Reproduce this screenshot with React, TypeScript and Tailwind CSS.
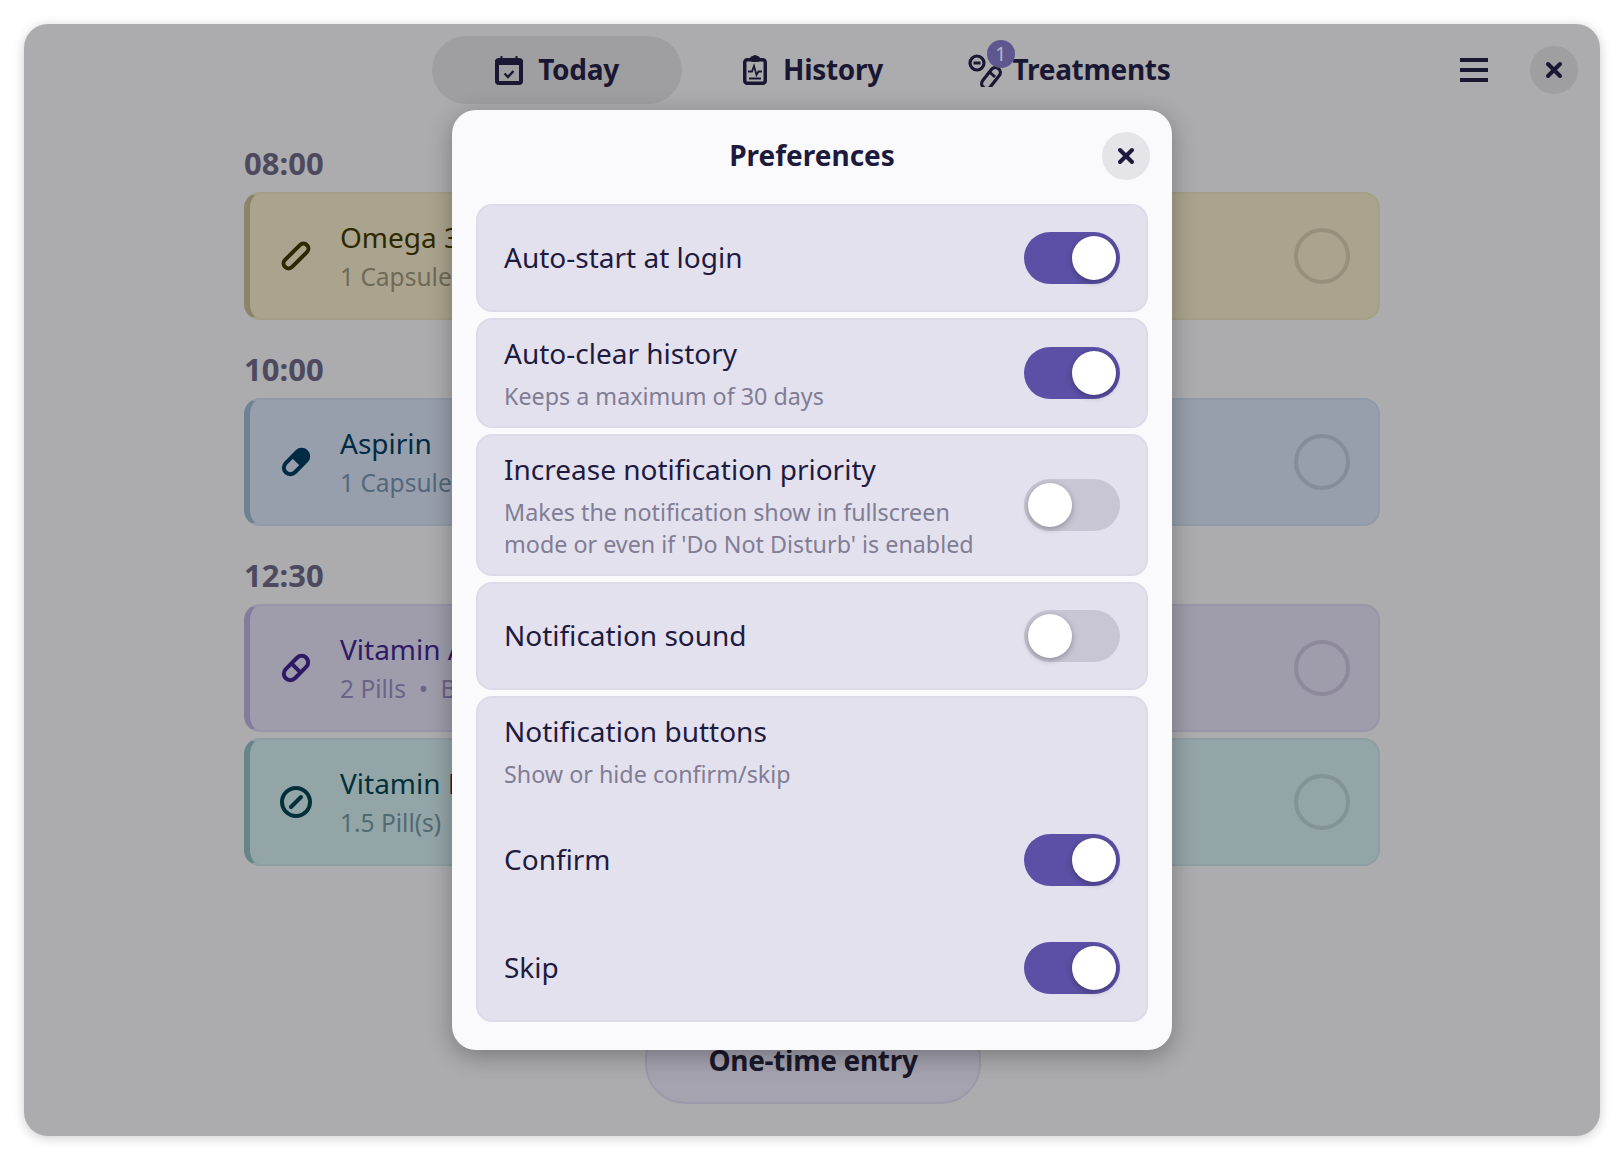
import { X } from "lucide-react";

const font = "font-['Noto_Sans','Liberation_Sans',sans-serif]";

function Toggle({ on }: { on: boolean }) {
  return (
    <div
      className={
        on
          ? "flex h-[52px] w-[96px] shrink-0 items-center justify-end rounded-full bg-[#5b50a6] p-1"
          : "flex h-[52px] w-[96px] shrink-0 items-center justify-start rounded-full bg-[#c8c6d4] p-1"
      }
    >
      <div className="h-11 w-11 rounded-full bg-white shadow-[0_2px_6px_rgba(0,0,0,0.3)]" />
    </div>
  );
}

function CalendarIcon() {
  return (
    <svg width="28" height="29" viewBox="0 0 28 29" fill="none" stroke="#1a1733">
      <rect x="2" y="4" width="24" height="23" rx="2" strokeWidth="4" />
      <path d="M0 6.5h28" strokeWidth="5" />
      <path d="M6.5 3V0M21.5 3V0" strokeWidth="2" />
      <path d="M9.5 17.5l3.5 3.5 5.5-6" strokeWidth="2.4" />
    </svg>
  );
}

function ClipboardIcon() {
  return (
    <svg width="24" height="30" viewBox="0 0 24 30" fill="none" stroke="#1a1733">
      <rect x="1.75" y="4.75" width="20.5" height="23.5" rx="2.5" strokeWidth="3.5" />
      <rect x="7" y="1" width="10" height="6" rx="3" fill="#1a1733" strokeWidth="0" />
      <circle cx="12" cy="2.5" r="2.5" fill="#1a1733" strokeWidth="0" />
      <path d="M5 16.5h4l2-5.5 2.5 9 2-3.5h3.5" strokeWidth="1.8" />
      <path d="M6 23.5h12" strokeWidth="2" />
    </svg>
  );
}

function TreatmentsIcon() {
  return (
    <svg width="34" height="34" viewBox="0 0 34 34" fill="none" stroke="#1a1733">
      <circle cx="9" cy="10" r="7" strokeWidth="3.2" />
      <path d="M5.5 10h7" strokeWidth="3" />
      <rect x="11" y="20" width="24" height="10" rx="5" strokeWidth="3.2" transform="rotate(-52 23 25)" />
      <path d="M21.5 19l5.5 5" strokeWidth="3" />
    </svg>
  );
}

function CapsuleIcon({ color, variant }: { color: string; variant: "plain" | "half" | "split" }) {
  if (variant === "plain") {
    return (
      <svg width="40" height="40" viewBox="0 0 40 40" fill="none">
        <rect x="4.5" y="15" width="31" height="10" rx="5" stroke={color} strokeWidth="4" transform="rotate(-45 20 20)" />
      </svg>
    );
  }
  return (
    <svg width="40" height="40" viewBox="0 0 40 40" fill="none">
      <g transform="rotate(-45 20 20)">
        {variant === "half" && <path d="M20 13.5h8a6.5 6.5 0 0 1 0 13h-8z" fill={color} />}
        <rect x="5.5" y="13.5" width="29" height="13" rx="6.5" stroke={color} strokeWidth="4" />
        {variant === "split" && <path d="M20 13v14" stroke={color} strokeWidth="4" />}
      </g>
    </svg>
  );
}

function BlockedIcon({ color }: { color: string }) {
  return (
    <svg width="34" height="34" viewBox="0 0 34 34" fill="none" stroke={color}>
      <circle cx="17" cy="17" r="14" strokeWidth="4" />
      <path d="M12 22l10-10" strokeWidth="4" strokeLinecap="round" />
    </svg>
  );
}

type Card = {
  name: string;
  sub: string;
  bg: string;
  title: string;
  text: string;
  ring: string;
  icon: React.ReactNode;
};

function ScheduleCard({ card }: { card: Card }) {
  return (
    <div className={`flex h-[128px] items-center rounded-2xl border-2 border-l-[6px] pr-[28px] pl-[26px] ${card.bg}`}>
      <div className="flex w-[40px] shrink-0 items-center justify-center">{card.icon}</div>
      <div className="ml-6 min-w-0 flex-1">
        <p className={`text-[28px] leading-[38px] ${card.title}`}>{card.name}</p>
        <p className={`mt-1 text-[24.5px] leading-[34px] whitespace-pre ${card.text}`}>{card.sub}</p>
      </div>
      <div className={`h-14 w-14 rounded-full border-4 ${card.ring}`} />
    </div>
  );
}

function Section({ time, cards, first }: { time: string; cards: Card[]; first?: boolean }) {
  return (
    <section className={first ? "mt-[41px]" : "mt-[31px]"}>
      <h2 className="mb-[11px] text-[31px] leading-9 font-bold text-[#4d4a60]">{time}</h2>
      <div className="flex flex-col gap-[6px]">
        {cards.map((c) => (
          <ScheduleCard key={c.name} card={c} />
        ))}
      </div>
    </section>
  );
}

const omega: Card = {
  name: "Omega 3",
  sub: "1 Capsule",
  bg: "border-[#a59f88] border-l-[#8a8469] bg-[#aaa48e]",
  title: "text-[#2e2800]",
  text: "text-[#6f6a58]",
  ring: "border-[#96907d]",
  icon: <CapsuleIcon color="#2e2800" variant="plain" />,
};
const aspirin: Card = {
  name: "Aspirin",
  sub: "1 Capsule",
  bg: "border-[#919aa8] border-l-[#6f8294] bg-[#979fac]",
  title: "text-[#012b44]",
  text: "text-[#55677b]",
  ring: "border-[#858d9b]",
  icon: <CapsuleIcon color="#012b44" variant="half" />,
};
const vitaminA: Card = {
  name: "Vitamin A",
  sub: "2 Pills  •  Before",
  bg: "border-[#9995a6] border-l-[#847c9b] bg-[#9f9cab]",
  title: "text-[#2e1a66]",
  text: "text-[#6a6488]",
  ring: "border-[#8e8a9b]",
  icon: <CapsuleIcon color="#2e1a66" variant="split" />,
};
const vitaminB: Card = {
  name: "Vitamin B",
  sub: "1.5 Pill(s)",
  bg: "border-[#8e9fa3] border-l-[#668588] bg-[#94a5a8]",
  title: "text-[#01303a]",
  text: "text-[#516a70]",
  ring: "border-[#839396]",
  icon: <BlockedIcon color="#01303a" />,
};

function PrefRow({ title, sub, on }: { title: string; sub?: string[]; on: boolean }) {
  return (
    <div className={`flex items-center justify-between rounded-2xl border-2 border-[#dddbe7] bg-[#e3e1ee] px-[26px] ${sub ? "" : "h-[108px]"}`}>
      <div className={sub ? "pt-[15px] pb-[14px]" : "pb-[2px]"}>
        <p className="text-[28px] leading-9 text-[#1f1b3f]">{title}</p>
        {sub && (
          <div className="mt-[9px] text-[23.3px] leading-8 text-[#807d95]">
            {sub.map((line) => (
              <p key={line}>{line}</p>
            ))}
          </div>
        )}
      </div>
      <Toggle on={on} />
    </div>
  );
}

export default function App() {
  return (
    <div className={`min-h-[1164px] bg-white pt-6 pl-6 ${font}`}>
      <div className="relative flex h-[1112px] w-[1576px] flex-col rounded-3xl bg-[#acacae] shadow-[0_2px_12px_rgba(0,0,0,0.2)]">
        <header className="grid grid-cols-[1fr_auto_1fr] items-center pt-3 pr-[22px] pl-6">
          <div />
          <nav className="flex gap-[6px] text-[28px] font-bold tracking-[-0.3px] text-[#1a1733]">
            <div className="flex h-[68px] w-[250px] items-center justify-center gap-[15px] rounded-full bg-[#9f9fa2]">
              <CalendarIcon />
              <span className="pb-[2px]">Today</span>
            </div>
            <div className="flex h-[68px] w-[250px] items-center justify-center gap-4 rounded-full">
              <ClipboardIcon />
              <span className="pb-[2px]">History</span>
            </div>
            <div className="flex h-[68px] w-[250px] items-center justify-center gap-[11px] rounded-full">
              <div className="relative">
                <TreatmentsIcon />
                <span className="absolute -top-[13px] left-[19px] flex h-7 w-7 items-center justify-center rounded-full bg-[#5e578f] text-[20px] font-normal text-[#b5b2c9]">
                  1
                </span>
              </div>
              <span className="pb-[2px]">Treatments</span>
            </div>
          </nav>
          <div className="flex items-center justify-end">
            <div className="flex w-7 flex-col gap-[6px]">
              <div className="h-1 bg-[#1a1733]" />
              <div className="h-1 bg-[#1a1733]" />
              <div className="h-1 bg-[#1a1733]" />
            </div>
            <div className="ml-[42px] flex h-12 w-12 items-center justify-center rounded-full bg-[#9f9fa2]">
              <X size={24} strokeWidth={4} color="#1a1733" />
            </div>
          </div>
        </header>

        <main className="mx-auto flex w-[1136px] flex-1 flex-col">
          <Section first time="08:00" cards={[omega]} />
          <Section time="10:00" cards={[aspirin]} />
          <Section time="12:30" cards={[vitaminA, vitaminB]} />
          <div className="mt-auto mb-8 ml-[2px] flex justify-center">
            <div className="flex h-[86px] w-[336px] items-center justify-center rounded-[40px] border-2 border-[#9b99aa] bg-[#a5a3af] pb-[3px] text-[28px] font-bold tracking-[-0.3px] text-[#1a182b]">
              One-time entry
            </div>
          </div>
        </main>

        <div className="absolute top-[86px] left-[428px] h-[940px] w-[720px] rounded-3xl bg-[#fafafc] px-6 pt-[22px] shadow-[0_6px_24px_rgba(0,0,0,0.3)]">
          <div className="mb-6 grid grid-cols-[1fr_auto_1fr] items-center">
            <div />
            <h1 className="pb-[2px] text-[28px] font-bold text-[#1e1a3d]">Preferences</h1>
            <div className="-mr-[2px] flex justify-end">
              <div className="flex h-12 w-12 items-center justify-center rounded-full bg-[#e4e4e9]">
                <X size={24} strokeWidth={4} color="#1e1a3d" />
              </div>
            </div>
          </div>
          <div className="flex flex-col gap-[6px]">
            <PrefRow title="Auto-start at login" on />
            <PrefRow title="Auto-clear history" sub={["Keeps a maximum of 30 days"]} on />
            <PrefRow
              title="Increase notification priority"
              sub={["Makes the notification show in fullscreen", "mode or even if 'Do Not Disturb' is enabled"]}
              on={false}
            />
            <PrefRow title="Notification sound" on={false} />
            <div className="rounded-2xl border-2 border-[#dddbe7] bg-[#e3e1ee] px-[26px] pt-[15px]">
              <p className="text-[28px] leading-9 text-[#1f1b3f]">Notification buttons</p>
              <p className="mt-[9px] mb-4 text-[23.3px] leading-8 text-[#807d95]">Show or hide confirm/skip</p>
              <div className="flex h-[108px] items-center justify-between">
                <p className="pb-[2px] text-[28px] leading-9 text-[#1f1b3f]">Confirm</p>
                <Toggle on />
              </div>
              <div className="flex h-[106px] items-center justify-between pt-[2px]">
                <p className="pb-[2px] text-[28px] leading-9 text-[#1f1b3f]">Skip</p>
                <Toggle on />
              </div>
            </div>
          </div>
        </div>
      </div>
    </div>
  );
}
